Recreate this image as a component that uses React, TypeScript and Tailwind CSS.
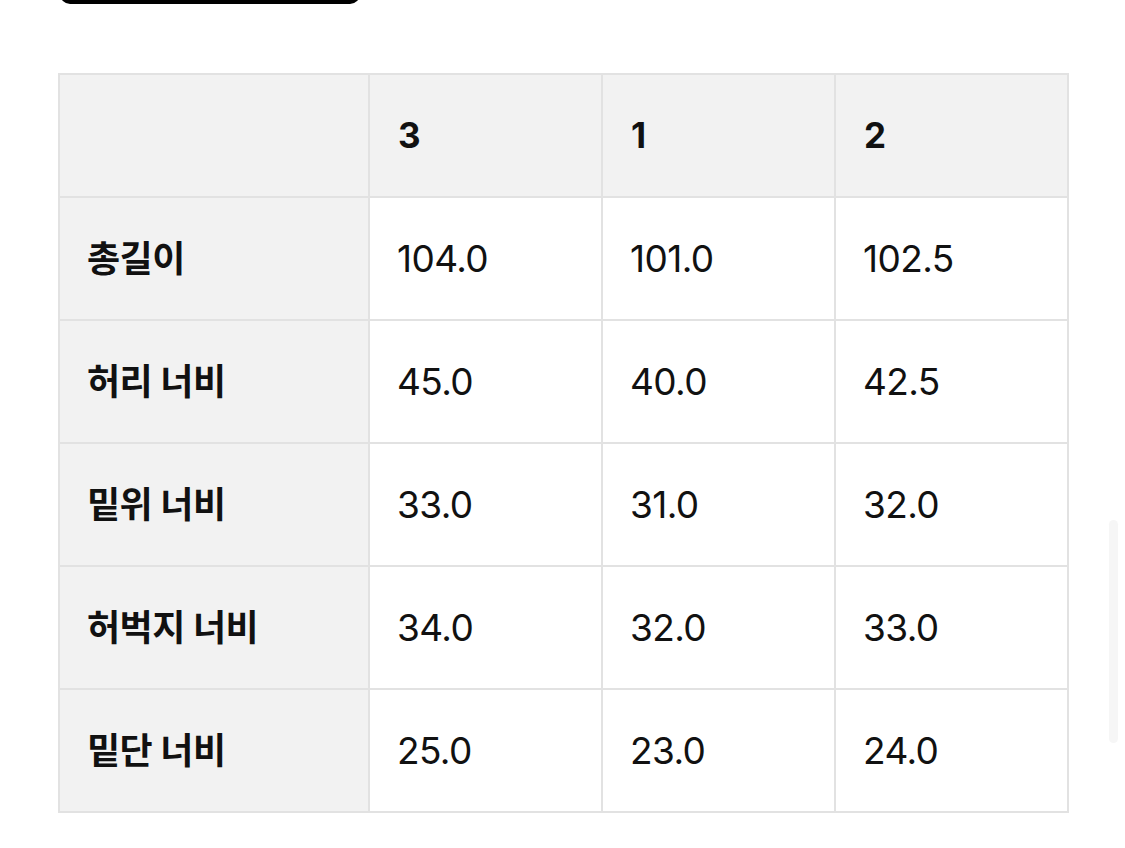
import React from 'react';

const HEAD = ['3', '1', '2'];

const ROWS = [
  { label: '총길이', values: ['104.0', '101.0', '102.5'] },
  { label: '허리 너비', values: ['45.0', '40.0', '42.5'] },
  { label: '밑위 너비', values: ['33.0', '31.0', '32.0'] },
  { label: '허벅지 너비', values: ['34.0', '32.0', '33.0'] },
  { label: '밑단 너비', values: ['25.0', '23.0', '24.0'] },
];

export default function App() {
  return (
    <div
      className="relative w-[1125px] h-[848px] overflow-hidden bg-white text-[#111]"
      style={{ fontFamily: '"Inter", "Noto Sans CJK KR", sans-serif' }}
    >
      {/* cut-off button above */}
      <div className="ml-[60px] mt-[-20px] h-[24px] w-[300px] rounded-b-[10px] bg-black" />

      <div className="ml-[58px] mt-[69px] w-[1009px]">
        <table className="w-full border-collapse table-fixed">
          <colgroup>
            <col className="w-[310px]" />
            <col className="w-[233px]" />
            <col className="w-[233px]" />
            <col className="w-[233px]" />
          </colgroup>
          <thead>
            <tr className="h-[123px] bg-[#f2f2f2]">
              <th className="border-2 border-[#e2e2e2]" />
              {HEAD.map((h) => (
                <th
                  key={h}
                  className="border-2 border-[#e2e2e2] pl-[28px] text-left text-[35px] font-bold"
                >
                  {h}
                </th>
              ))}
            </tr>
          </thead>
          <tbody>
            {ROWS.map((r) => (
              <tr key={r.label} className="h-[123px]">
                <td className="border-2 border-[#e2e2e2] bg-[#f2f2f2] pl-[27px] text-[36px] font-bold tracking-[-0.5px]">
                  {r.label}
                </td>
                {r.values.map((v, i) => (
                  <td
                    key={i}
                    className="border-2 border-[#e2e2e2] pl-[27px] text-[37px] tracking-[-0.6px]"
                  >
                    {v}
                  </td>
                ))}
              </tr>
            ))}
          </tbody>
        </table>
      </div>

      {/* scrollbar */}
      <div className="absolute left-[1109px] top-[520px] h-[223px] w-[9px] rounded-full bg-[#f6f6f6]" />
    </div>
  );
}
